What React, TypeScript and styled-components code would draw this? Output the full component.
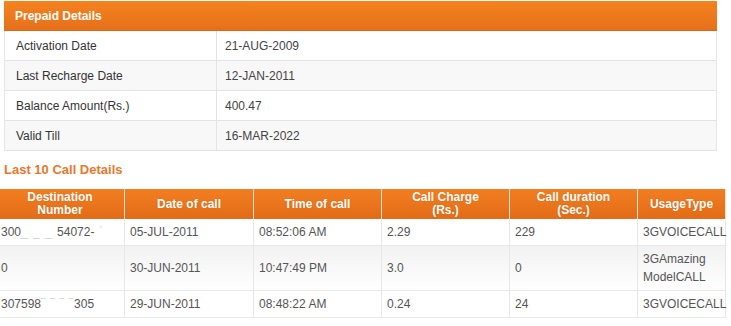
import React from "react";
import styled, { createGlobalStyle } from "styled-components";

const Global = createGlobalStyle`
  html, body { margin: 0; padding: 0; background: #fff; }
  body { font-family: "Liberation Sans", Arial, sans-serif; font-size: 12px; overflow: hidden; }
`;

const Page = styled.div`
  width: 731px;
  height: 326px;
  overflow: hidden;
  padding-top: 1px;
  box-sizing: border-box;
`;

const Panel = styled.section`
  margin-left: 4px;
  width: 713px;
  border-left: 1px solid #e6e6e6;
  border-right: 1px solid #e6e6e6;
  box-sizing: border-box;
`;

const PanelHeader = styled.div`
  height: 30px;
  display: flex;
  align-items: center;
  padding-left: 11px;
  margin: 0 -1px;
  background: linear-gradient(#f5821f, #e5701a);
  color: #fff;
  font-weight: bold;
  font-size: 12px;
  border-bottom: 1px solid #d9691c;
  box-sizing: border-box;
`;

const InfoRow = styled.div<{ $alt?: boolean }>`
  display: grid;
  grid-template-columns: 212px 1fr;
  height: 30px;
  border-bottom: 1px solid #e3e3e3;
  background: ${(p) => (p.$alt ? "#f8f8f8" : "#fff")};
  box-sizing: border-box;
  color: #333;
`;

const InfoLabel = styled.div`
  display: flex;
  align-items: center;
  padding-left: 11px;
  border-right: 1px solid #e3e3e3;
`;

const InfoValue = styled.div`
  display: flex;
  align-items: center;
  padding-left: 8px;
  color: #444;
`;

const SectionTitle = styled.h3`
  margin: 11px 0 0 4px;
  height: 27px;
  font-size: 13px;
  font-weight: bold;
  color: #e8782c;
  line-height: 16px;
`;

const CallTable = styled.div`
  margin-left: -4px;
  display: grid;
  grid-template-columns: 129px 129px 128px 128px 128px 88px;
  width: 730px;
`;

const HeadCell = styled.div`
  height: 30px;
  display: flex;
  align-items: center;
  justify-content: center;
  text-align: center;
  background: linear-gradient(#f27e21, #e26c17);
  color: #fff;
  font-weight: bold;
  font-size: 12px;
  line-height: 13px;
  border-right: 1px solid #fbe3cf;
  box-sizing: border-box;
  text-shadow: 0 0 1px rgba(150, 60, 0, 0.35);
`;

const BodyCell = styled.div<{ $shade?: boolean }>`
  display: flex;
  align-items: center;
  padding: 4px 4px 4px 5px;
  line-height: 18px;
  color: #555;
  border-right: 1px solid #e4e8ee;
  border-bottom: 1px solid #e8e8e8;
  background: ${(p) => (p.$shade ? "linear-gradient(#f2f2f2, #fff)" : "#fff")};
  box-sizing: border-box;
  white-space: normal;
`;

const Faint = styled.span`
  color: #d0d0d0;
  letter-spacing: 1px;
`;

const info = [
  ["Activation Date", "21-AUG-2009"],
  ["Last Recharge Date", "12-JAN-2011"],
  ["Balance Amount(Rs.)", "400.47"],
  ["Valid Till", "16-MAR-2022"],
];

const heads: React.ReactNode[] = [
  <>Destination<br />Number</>,
  "Date of call",
  "Time of call",
  <>Call Charge<br />(Rs.)</>,
  <>Call duration<br />(Sec.)</>,
  "UsageType",
];

const calls: React.ReactNode[][] = [
  [<>300<Faint>_ _ _ </Faint>54072-<Faint> `</Faint></>, "05-JUL-2011", "08:52:06 AM", "2.29", "229", "3GVOICECALL"],
  ["0", "30-JUN-2011", "10:47:49 PM", "3.0", "0", <>3GAmazing<br />ModelCALL</>],
  [<>307598<Faint>‾ ‾ ‾ ‾</Faint>305</>, "29-JUN-2011", "08:48:22 AM", "0.24", "24", "3GVOICECALL"],
];

export default function App() {
  return (
    <Page>
      <Global />
      <Panel>
        <PanelHeader>Prepaid Details</PanelHeader>
        {info.map(([k, v], i) => (
          <InfoRow key={k} $alt={i % 2 === 1}>
            <InfoLabel>{k}</InfoLabel>
            <InfoValue>{v}</InfoValue>
          </InfoRow>
        ))}
      </Panel>
      <SectionTitle>Last 10 Call Details</SectionTitle>
      <CallTable>
        {heads.map((h, i) => (
          <HeadCell key={i}>
            <span>{h}</span>
          </HeadCell>
        ))}
        {calls.map((row, r) =>
          row.map((c, i) => (
            <BodyCell key={`${r}-${i}`} $shade={r === 1}>
              <span>{c}</span>
            </BodyCell>
          ))
        )}
      </CallTable>
    </Page>
  );
}
